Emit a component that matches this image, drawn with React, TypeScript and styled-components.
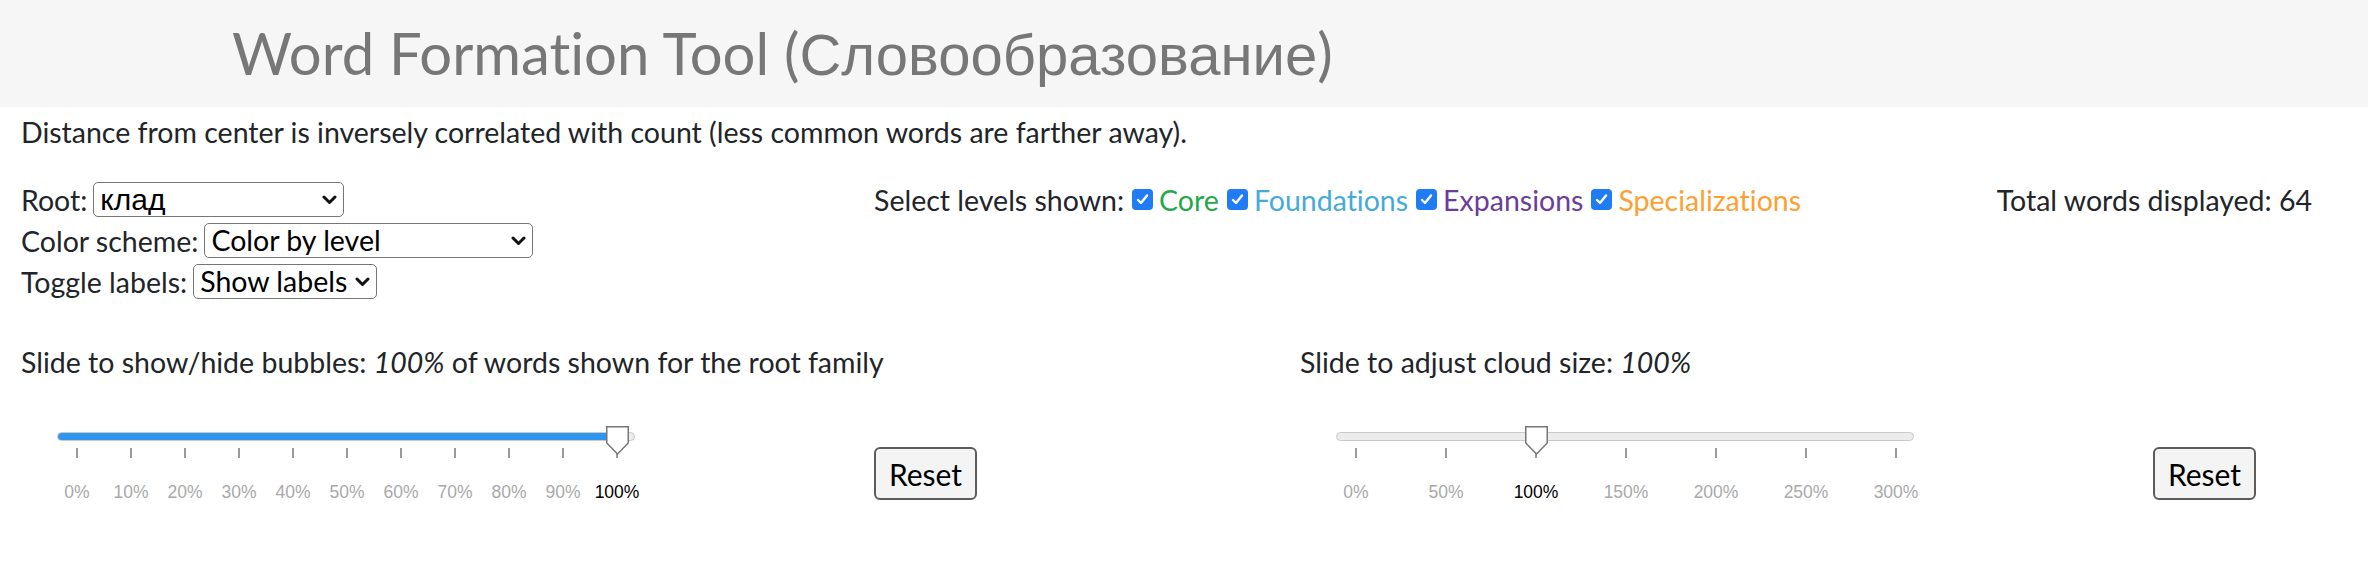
import React from "react";
import styled, { createGlobalStyle } from "styled-components";

const GlobalStyle = createGlobalStyle`
  html, body { margin: 0; padding: 0; background: #ffffff; }
  body {
    font-family: "Lato", "Liberation Sans", sans-serif;
    color: #212529;
    font-variant-ligatures: none;
    font-feature-settings: "liga" 0;
  }
  * { box-sizing: border-box; }
`;

const Page = styled.div`
  width: 2368px;
  min-height: 566px;
`;

const Header = styled.header`
  height: 107px;
  background: #f6f6f6;
  padding-left: 232px;
  display: flex;
  align-items: center;
`;

const Title = styled.h1`
  margin: 0;
  font-weight: 400;
  font-size: 58px;
  line-height: 1;
  color: #777777;
`;

const Cyr = styled.span`
  font-family: "Liberation Sans", Arial, sans-serif;
`;

const Content = styled.main`
  padding: 0 21px;
`;

const Description = styled.p`
  margin: 0;
  padding-top: 8px;
  font-size: 28.5px;
  line-height: 34px;
`;

const ControlsRow = styled.section`
  display: grid;
  grid-template-columns: 853px 1fr auto;
  margin-top: 30px;
  margin-right: 35px;
  font-size: 28.5px;
`;

const SelectColumn = styled.div`
  display: flex;
  flex-direction: column;
`;

const Field = styled.div`
  display: flex;
  align-items: center;
  height: 41px;
`;

const FieldLabel = styled.span`
  margin-right: 6px;
  white-space: nowrap;
`;

const SelectWrap = styled.span`
  position: relative;
  display: inline-flex;
  align-items: center;
`;

const NativeSelect = styled.select<{ $width: number; $cyr?: boolean }>`
  appearance: none;
  -webkit-appearance: none;
  width: ${(p) => p.$width}px;
  height: 35px;
  padding: 0 22px 0 6px;
  border: 1.5px solid #767676;
  border-radius: 5px;
  background: #ffffff;
  color: #000000;
  font-size: ${(p) => (p.$cyr ? "30px" : "28.5px")};
  line-height: 1;
  font-family: ${(p) => (p.$cyr ? '"Liberation Sans", Arial, sans-serif' : '"Lato", sans-serif')};
  font-variant-ligatures: none;
  outline: none;
`;

const Chevron = styled.svg`
  position: absolute;
  right: 7px;
  top: 50%;
  margin-top: -5px;
  width: 15px;
  height: 10px;
  pointer-events: none;
`;

const LevelsRow = styled.div`
  display: flex;
  align-items: center;
  height: 41px;
  white-space: nowrap;
`;

const CheckBox = styled.span`
  flex: none;
  width: 21px;
  height: 21px;
  margin: 0 6px 0 8px;
  border-radius: 4px;
  background: #1f7cf4;
  display: inline-flex;
  align-items: center;
  justify-content: center;
`;

const LevelName = styled.span<{ $color: string }>`
  color: ${(p) => p.$color};
`;

const Total = styled.div`
  display: flex;
  align-items: center;
  height: 41px;
  white-space: nowrap;
`;

const SliderRow = styled.section`
  display: flex;
  margin-top: 43px;
`;

const SliderPanel = styled.div<{ $width?: number }>`
  display: flex;
  flex-direction: column;
  ${(p) => (p.$width ? `width: ${p.$width}px; flex: none;` : "flex: 1;")}
`;

const SliderLabel = styled.div`
  font-size: 28.5px;
  line-height: 34px;
  white-space: nowrap;
`;

const SliderLine = styled.div`
  display: flex;
  align-items: flex-start;
  margin-top: 47px;
`;

const SliderArea = styled.div`
  width: 853px;
  flex: none;
  padding-left: 36px;
`;

const SliderBox = styled.div`
  position: relative;
  width: 578px;
  padding-top: 5.5px;
`;

const Track = styled.div`
  position: relative;
  height: 9px;
  border: 1px solid #c9c9c9;
  border-radius: 5px;
  background: #ececec;
  overflow: hidden;
`;

const Fill = styled.div`
  height: 100%;
  background: #2e96ee;
`;

const Thumb = styled.svg`
  position: absolute;
  top: 0;
  width: 23px;
  height: 29px;
`;

const TickRow = styled.div`
  display: flex;
  justify-content: space-between;
  width: 540px;
  margin: 7.5px 0 0 20px;
`;

const TickItem = styled.div`
  width: 0;
  display: flex;
  flex-direction: column;
  align-items: center;
`;

const TickMark = styled.div`
  width: 1.5px;
  height: 10px;
  background: #9a9a9a;
`;

const TickLabel = styled.div<{ $active: boolean }>`
  margin-top: 24px;
  font-family: "Liberation Sans", Arial, sans-serif;
  font-size: 17.5px;
  line-height: 20px;
  white-space: nowrap;
  color: ${(p) => (p.$active ? "#000000" : "#a9a9a9")};
`;

const ResetButton = styled.button`
  margin-top: 21px;
  width: 103px;
  height: 53px;
  padding: 0;
  border: 2px solid #5c5c5c;
  border-radius: 6px;
  background: #f4f4f4;
  color: #000000;
  font-family: "Lato", sans-serif;
  font-size: 30px;
`;

function Select({ width, options, cyr }: { width: number; options: string[]; cyr?: boolean }) {
  return (
    <SelectWrap>
      <NativeSelect $width={width} $cyr={cyr} defaultValue={options[0]}>
        {options.map((o) => (
          <option key={o}>{o}</option>
        ))}
      </NativeSelect>
      <Chevron viewBox="0 0 15 10">
        <polyline points="2,2 7.5,7.5 13,2" fill="none" stroke="#111" strokeWidth="3" strokeLinecap="round" strokeLinejoin="round" />
      </Chevron>
    </SelectWrap>
  );
}

function Check() {
  return (
    <CheckBox>
      <svg width="15" height="15" viewBox="0 0 15 15">
        <polyline points="3,8 6,11 12,3.5" fill="none" stroke="#fff" strokeWidth="2.4" strokeLinecap="round" strokeLinejoin="round" />
      </svg>
    </CheckBox>
  );
}

function Slider({ labels, value, active }: { labels: string[]; value: number; active: number }) {
  const thumbLeft = 20 + value * 540 - 11.5;
  return (
    <SliderBox>
      <Track>
        <Fill style={{ width: value > 0.9 ? `${20 + value * 540}px` : "0px" }} />
      </Track>
      <Thumb viewBox="0 0 23 29" style={{ left: `${thumbLeft}px` }}>
        <polygon points="0.75,0.75 22.25,0.75 22.25,17 11.5,28 0.75,17" fill="#fff" stroke="#777" strokeWidth="1.5" />
      </Thumb>
      <TickRow>
        {labels.map((l, i) => (
          <TickItem key={l}>
            <TickMark />
            <TickLabel $active={i === active}>{l}</TickLabel>
          </TickItem>
        ))}
      </TickRow>
    </SliderBox>
  );
}

const levels = [
  { name: "Core", color: "#1fa94a" },
  { name: "Foundations", color: "#46a9dc" },
  { name: "Expansions", color: "#6a3d9a" },
  { name: "Specializations", color: "#ff9f33" },
];

export default function App() {
  const pctLabels = ["0%", "10%", "20%", "30%", "40%", "50%", "60%", "70%", "80%", "90%", "100%"];
  const sizeLabels = ["0%", "50%", "100%", "150%", "200%", "250%", "300%"];
  return (
    <Page>
      <GlobalStyle />
      <Header>
        <Title>
          Word Formation Tool (<Cyr>Словообразование</Cyr>)
        </Title>
      </Header>
      <Content>
        <Description>
          Distance from center is inversely correlated with count (less common words are farther away).
        </Description>
        <ControlsRow>
          <SelectColumn>
            <Field>
              <FieldLabel>Root:</FieldLabel>
              <Select width={251} options={["клад"]} cyr />
            </Field>
            <Field>
              <FieldLabel>Color scheme:</FieldLabel>
              <Select width={329} options={["Color by level", "Color by part of speech"]} />
            </Field>
            <Field>
              <FieldLabel>Toggle labels:</FieldLabel>
              <Select width={184} options={["Show labels", "Hide labels"]} />
            </Field>
          </SelectColumn>
          <LevelsRow>
            <span>Select levels shown:</span>
            {levels.map((l) => (
              <React.Fragment key={l.name}>
                <Check />
                <LevelName $color={l.color}>{l.name}</LevelName>
              </React.Fragment>
            ))}
          </LevelsRow>
          <Total>Total words displayed: 64</Total>
        </ControlsRow>
        <SliderRow>
          <SliderPanel $width={1279}>
            <SliderLabel>
              Slide to show/hide bubbles: <em>100%</em> of words shown for the root family
            </SliderLabel>
            <SliderLine>
              <SliderArea>
                <Slider labels={pctLabels} value={1} active={10} />
              </SliderArea>
              <ResetButton>Reset</ResetButton>
            </SliderLine>
          </SliderPanel>
          <SliderPanel>
            <SliderLabel>
              Slide to adjust cloud size: <em>100%</em>
            </SliderLabel>
            <SliderLine>
              <SliderArea>
                <Slider labels={sizeLabels} value={2 / 6} active={2} />
              </SliderArea>
              <ResetButton>Reset</ResetButton>
            </SliderLine>
          </SliderPanel>
        </SliderRow>
      </Content>
    </Page>
  );
}
